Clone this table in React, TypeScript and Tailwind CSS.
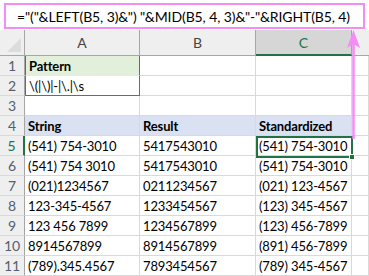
const font = { fontFamily: "Lato, 'Open Sans', sans-serif" };

type Row = { n: number; a?: string; b?: string; c?: string };

const rows: Row[] = [
  { n: 1, a: "Pattern" },
  { n: 2, a: "\\(|\\)|-|\\.|\\s" },
  { n: 3 },
  { n: 4, a: "String", b: "Result", c: "Standardized" },
  { n: 5, a: "(541) 754-3010", b: "5417543010", c: "(541) 754-3010" },
  { n: 6, a: "(541) 754 3010", b: "5417543010", c: "(541) 754-3010" },
  { n: 7, a: "(021)1234567", b: "0211234567", c: "(021) 123-4567" },
  { n: 8, a: "123-345-4567", b: "1233454567", c: "(123) 345-4567" },
  { n: 9, a: "123 456 7899", b: "1234567899", c: "(123) 456-7899" },
  { n: 10, a: "8914567899", b: "8914567899", c: "(891) 456-7899" },
  { n: 11, a: "(789).345.4567", b: "7893454567", c: "(789) 345-4567" },
];

function cellClass(n: number, col: "a" | "b" | "c" | "d") {
  let cls = "h-5 border-r border-b border-[#d9d9d9] pl-[3px] text-[13px] tracking-[-0.15px] leading-5 text-black whitespace-nowrap overflow-hidden";
  if (n === 4 && col !== "d") cls += " bg-[#d9e1f2] font-bold";
  if (n === 1 && col === "a") cls += " bg-[#e2efda] font-bold";
  if (col === "a" && (n === 1 || n === 2)) cls += " !border-r-[#6b6b6b] border-l border-l-[#6b6b6b]";
  if (col === "a" && n === 2) cls += " !border-b-[#6b6b6b]";
  if (col === "a" && n === 1) cls += " !border-b-[#e2efda]";
  return cls;
}

export default function App() {
  return (
    <div className="relative h-[276px] w-[369px] overflow-hidden bg-white" style={font}>
      <div className="h-[30px] px-[4px] pt-[3px]">
        <div className="flex h-[26px] items-center border-2 border-[#f58cf5] pl-[11px] text-[14px] tracking-[-0.1px] text-black whitespace-nowrap">
          ="("&amp;LEFT(B5, 3)&amp;") "&amp;MID(B5, 4, 3)&amp;"-"&amp;RIGHT(B5, 4)
        </div>
      </div>

      <div className="grid grid-cols-[25px_115px_116px_96px_1fr]">
        <div className="relative h-[26px] border-r border-b border-[#a6a6a6] bg-[#efefef]">
          <svg className="absolute right-[3px] bottom-[3px]" width="14" height="14">
            <polygon points="14,0 14,14 0,14" fill="#dcdcdc" />
          </svg>
        </div>
        <div className="flex h-[26px] items-center justify-center border-r border-b border-[#a6a6a6] bg-[#efefef] text-[14px] text-[#444]">A</div>
        <div className="flex h-[26px] items-center justify-center border-r border-b border-[#a6a6a6] bg-[#efefef] text-[14px] text-[#444]">B</div>
        <div className="flex h-[26px] items-center justify-center border-b-2 border-r border-r-[#a6a6a6] border-b-[#217346] bg-[#d6d6d6] text-[14px] text-[#217346]">C</div>
        <div className="h-[26px] border-b border-[#a6a6a6] bg-[#efefef]" />

        {rows.map((r) => (
          <div key={r.n} className="contents">
            <div
              className={
                "flex h-5 items-center justify-center bg-[#efefef] text-[14px] leading-5 " +
                (r.n === 5
                  ? "border-r-2 border-b border-r-[#217346] border-b-[#d9d9d9] bg-[#e0e0e0] text-[#217346]"
                  : "border-r border-b border-r-[#a6a6a6] border-b-[#d9d9d9] text-[#526070]")
              }
            >
              {r.n}
            </div>
            <div className={cellClass(r.n, "a")}>{r.a}</div>
            <div className={cellClass(r.n, "b")}>{r.b}</div>
            <div className={cellClass(r.n, "c")}>{r.c}</div>
            <div className={cellClass(r.n, "d")} />
          </div>
        ))}
      </div>

      {/* selected cell C5 */}
      <div className="absolute left-[256px] top-[136px] h-[22px] w-[97px] border-2 border-[#217346]" />
      <div className="absolute left-[349px] top-[154px] h-[6px] w-[6px] border border-white bg-[#217346]" />

      {/* arrow */}
      <svg className="absolute left-[345px] top-[29px]" width="16" height="110">
        <line x1="8.5" y1="14" x2="8.5" y2="110" stroke="#f58cf5" strokeWidth="2.5" />
        <polygon points="8.5,1 15,19 8.5,15 2,19" fill="#f58cf5" />
      </svg>
    </div>
  );
}
